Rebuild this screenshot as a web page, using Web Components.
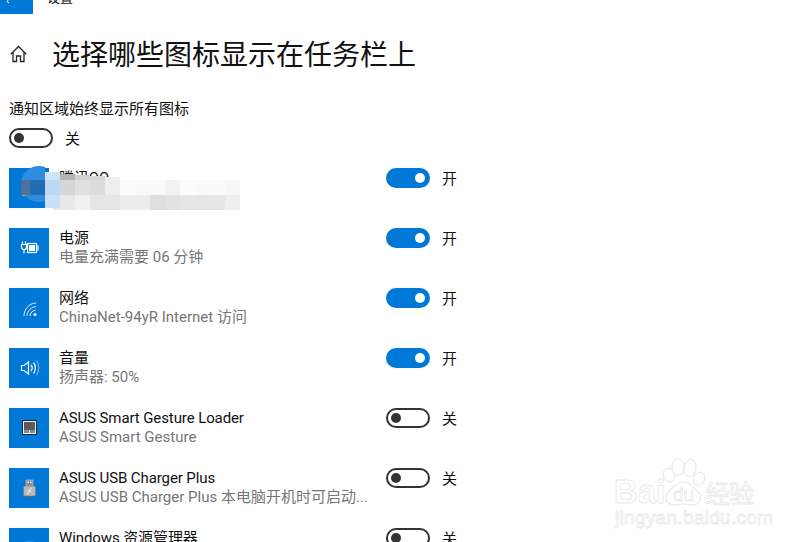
<!DOCTYPE html>
<html lang="zh">
<head>
<meta charset="utf-8">
<title>设置</title>
<style>
    html, body { margin: 0; height: 100%; background: #fff; overflow: hidden; }
    body {
        position: relative;
        color: #000;
        font-family: Roboto, "Noto Sans CJK SC", sans-serif;
        font-size: 15px;
    }
</style>
</head>
<body>
<settings-bar>设置</settings-bar>
<page-title>选择哪些图标显示在任务栏上</page-title>
<master-switch label="通知区域始终显示所有图标"></master-switch>

<tray-row name="腾讯QQ" sub="" on>
    <svg slot="icon" viewBox="0 0 40 40" width="40" height="40">
        <path d="M13 23h2l1 2h-3z" fill="#111"/><rect x="13" y="27" width="4" height="1" fill="#f0a020"/>
    </svg>
</tray-row>
<tray-row name="电源" sub="电量充满需要 06 分钟" on>
    <svg slot="icon" viewBox="0 0 40 40" width="40" height="40" fill="none" stroke="#fff" stroke-width="1.2">
        <path d="M13.5 13.5v3M16.5 13.5v3M12.5 16.5h5v2.5a2.5 2.5 0 0 1-5 0zM15 21.500v4"/>
        <rect x="18.500" y="15.500" width="9" height="9"/>
        <rect x="20" y="17" width="6" height="6" fill="#fff" stroke="none"/>
        <path d="M27.500 18h1.500v4h-1.500"/>
    </svg>
</tray-row>
<tray-row name="网络" sub="ChinaNet-94yR Internet 访问" on>
    <svg slot="icon" viewBox="0 0 40 40" width="40" height="40" fill="none" stroke="#fff" stroke-width="1">
        <path d="M15 28c0-7 5-12.500 12-13" opacity=".85"/>
        <path d="M18 28c0-5 4-9 9-9.500" opacity=".85"/>
        <path d="M21 28c0-3 2.500-5.500 5.500-6"/>
        <circle cx="26" cy="26.500" r="1.600" fill="#fff" stroke="none"/>
    </svg>
</tray-row>
<tray-row name="音量" sub="扬声器: 50%" on>
    <svg slot="icon" viewBox="0 0 40 40" width="40" height="40" fill="none" stroke="#fff" stroke-width="1.200">
        <path d="M12.500 17.500h2.500l4.500-3.500v12l-4.500-3.500h-2.500z"/>
        <path d="M22 17c1.500 1.800 1.500 4.200 0 6"/>
        <path d="M24.500 14.500c2.500 3 2.500 8 0 11"/>
        <path d="M27.500 12.500c3 4 3 11 0 15" opacity=".45"/>
    </svg>
</tray-row>
<tray-row name="ASUS Smart Gesture Loader" sub="ASUS Smart Gesture">
    <svg slot="icon" viewBox="0 0 40 40" width="40" height="40">
        <rect x="13.500" y="12.500" width="14" height="14" fill="#5a5a5a" stroke="#1d2530" stroke-width="1"/>
        <rect x="14.500" y="13.500" width="12" height="12" fill="none" stroke="#eef" stroke-width="1"/>
        <rect x="15" y="22" width="11" height="3" fill="#8a8a8a"/>
        <rect x="20" y="22" width="1" height="3" fill="#ddd"/>
    </svg>
</tray-row>
<tray-row name="ASUS USB Charger Plus" sub="ASUS USB Charger Plus 本电脑开机时可启动...">
    <svg slot="icon" viewBox="0 0 40 40" width="40" height="40">
        <rect x="17" y="12" width="7" height="6" fill="#8b8b8b" stroke="#ccc" stroke-width=".6"/>
        <rect x="18.500" y="13.500" width="1.500" height="1.500" fill="#eee"/>
        <rect x="21" y="13.500" width="1.500" height="1.500" fill="#eee"/>
        <rect x="14.500" y="18" width="12" height="10" rx="1.500" fill="#b9b9b9" stroke="#777" stroke-width=".6"/>
        <path d="M23 20l-4 3h3l-4 3" fill="none" stroke="#eee" stroke-width="1"/>
        <rect x="18.500" y="28" width="4" height="1.500" fill="#666"/>
    </svg>
</tray-row>
<tray-row name="Windows 资源管理器" sub="">
    <svg slot="icon" viewBox="0 0 40 40" width="40" height="40">
        <ellipse cx="20" cy="16" rx="7" ry="3.500" fill="#1a8ae6"/>
    </svg>
</tray-row>

<mosaic-patch></mosaic-patch>
<baidu-mark></baidu-mark>

<script>
// barra superior, recortada por el scroll de la captura
class SettingsBar extends HTMLElement {
    constructor() {
        super();
        this.attachShadow({ mode: 'open' });
        this.shadowRoot.innerHTML = `
        <style>
            :host { display: flex; height: 14px; gap: 14px; overflow: hidden; }
            .back { width: 33px; height: 14px; background: #0078d7; flex: none; }
            .back svg { display: block; }
            .txt { font-size: 13px; line-height: 16px; margin-top: -10px; color: #111; }
        </style>
        <div class="back">
            <svg width="33" height="14" viewBox="0 0 33 14" fill="none" stroke="#fff" stroke-width="1">
                <path d="M9 -1 L7 1.500 L9 3"/>
            </svg>
        </div>
        <div class="txt"><slot></slot></div>
        `;
    }
}

class PageTitle extends HTMLElement {
    constructor() {
        super();
        this.attachShadow({ mode: 'open' });
        this.shadowRoot.innerHTML = `
        <style>
            :host {
                display: flex;
                align-items: center;
                height: 40px;
                margin-top: 20px;
                padding-left: 10px;
                gap: 25px;
            }
            svg { flex: none; }
            h1 { margin: 4px 0 0; font-size: 28px; font-weight: 400; line-height: 40px; white-space: nowrap; color: #111; }
        </style>
        <svg width="17" height="18" viewBox="0 0 17 18" fill="none" stroke="#222" stroke-width="1.300">
            <path d="M.8 9.200 8.500 1.500l7.700 7.700M3 7.500v9h3.500v-5.500h4v5.500h3.500v-9"/>
        </svg>
        <h1><slot></slot></h1>
        `;
    }
}

// interruptor: atributo "on" = encendido
class ToggleSwitch extends HTMLElement {
    static get observedAttributes() {
        return ['on'];
    }

    constructor() {
        super();
        this.attachShadow({ mode: 'open' });
    }

    connectedCallback() {
        this.render();
    }

    attributeChangedCallback() {
        this.render();
    }

    render() {
        const on = this.hasAttribute('on');
        this.shadowRoot.innerHTML = `
        <style>
            :host { display: flex; align-items: flex-start; height: 20px; gap: 12px; flex: none; }
            .track {
                box-sizing: border-box;
                width: 44px;
                height: 20px;
                border-radius: 10px;
                border: 2px solid ${on ? '#0078d7' : '#333'};
                background: ${on ? '#0078d7' : '#fff'};
                display: flex;
                align-items: center;
                justify-content: ${on ? 'flex-end' : 'flex-start'};
                padding: 0 3px;
            }
            .knob { width: 10px; height: 10px; border-radius: 50%; background: ${on ? '#fff' : '#333'}; }
            .label { font-size: 15px; line-height: 20px; margin-top: 1px; color: #111; }
        </style>
        <div class="track"><div class="knob"></div></div>
        <div class="label">${on ? '开' : '关'}</div>
        `;
    }
}

class MasterSwitch extends HTMLElement {
    constructor() {
        super();
        this.attachShadow({ mode: 'open' });
        this.shadowRoot.innerHTML = `
        <style>
            :host { display: block; margin-top: 24px; margin-bottom: 20px; padding-left: 9px; }
            .cap { font-size: 15px; line-height: 20px; padding-top: 1px; margin-bottom: 9px; color: #111; }
        </style>
        <div class="cap">${this.getAttribute('label')}</div>
        <toggle-switch></toggle-switch>
        `;
    }
}

class TrayRow extends HTMLElement {
    constructor() {
        super();
        this.attachShadow({ mode: 'open' });
        const name = this.getAttribute('name');
        const sub = this.getAttribute('sub');
        const on = this.hasAttribute('on');
        this.shadowRoot.innerHTML = `
        <style>
            :host {
                display: flex;
                height: 40px;
                margin-bottom: 20px;
                padding-left: 9px;
                align-items: flex-start;
            }
            .tile { width: 40px; height: 40px; background: #0078d7; flex: none; margin-right: 10px; }
            .tile ::slotted(svg) { display: block; }
            .text { width: 327px; flex: none; margin-top: 1px; }
            .name { font-size: 15px; line-height: 19px; letter-spacing: -.1px; color: #111; white-space: nowrap; }
            .sub { font-size: 15px; line-height: 19px; color: #767676; white-space: nowrap; }
        </style>
        <div class="tile"><slot name="icon"></slot></div>
        <div class="text">
            <div class="name">${name}</div>
            <div class="sub">${sub}</div>
        </div>
        <toggle-switch ${on ? 'on' : ''}></toggle-switch>
        `;
    }
}

// mosaico que tapa el texto de la primera fila
class MosaicPatch extends HTMLElement {
    constructor() {
        super();
        this.attachShadow({ mode: 'open' });
        const rowA = ['d6d6d6', 'e0e0e0', 'dcdcdc', 'eeeeee', 'fbfbfb', 'fafafa', 'fafafa', 'f2f2f2', 'fbfbfb', 'f9f9f9', 'fafafa', 'f6f6f6'];
        const rowB = ['e8e8e8', 'f0f0f0', 'e4e4e4', 'e6e6e6', 'ececec', 'ececec', 'dfdfdf', 'e2e2e2', 'e6e6e6', 'e5e5e5', 'e6e6e6', 'eeeeee'];
        const cell = (x, y, w, h, c) =>
            `<i style="left:${x}px;top:${y}px;width:${w}px;height:${h}px;background:${c}"></i>`;
        let cells = '';
        rowA.forEach((c, i) => { cells += cell(60 + i * 15, 180, 15, 15, '#' + c); });
        rowB.forEach((c, i) => { cells += cell(60 + i * 15, 195, 15, 15, '#' + c); });
        this.shadowRoot.innerHTML = `
        <style>
            :host { position: absolute; left: 0; top: 0; width: 0; height: 0; }
            i { position: absolute; display: block; }
            .dot {
                position: absolute; left: 21px; top: 166px; width: 36px; height: 36px;
                border-radius: 50%; background: #2f8de0;
                clip-path: inset(0 12px 0 0);
            }
        </style>
        <div class="dot"></div>
        ${cell(21, 180, 9, 15, '#4f7099')}
        ${cell(30, 180, 15, 15, '#206cb6')}
        ${cell(45, 172, 15, 8, '#cfe4f7')}
        ${cell(45, 180, 15, 15, '#b9d8f3')}
        ${cell(45, 195, 15, 13, '#c8e1f7')}
        ${cell(53, 208, 7, 2, '#d8e9f8')}
        ${cell(60, 174, 15, 6, '#b4b4b4')}
        ${cell(75, 175, 15, 5, '#d2d2d2')}
        ${cell(90, 176, 15, 4, '#d8d8d8')}
        ${cell(105, 177, 15, 3, '#eeeeee')}
        ${cells}
        `;
    }
}

// marca de agua de la esquina
class BaiduMark extends HTMLElement {
    constructor() {
        super();
        this.attachShadow({ mode: 'open' });
        this.shadowRoot.innerHTML = `
        <style>
            :host {
                position: absolute;
                left: 614px;
                top: 454px;
                width: 150px;
                height: 76px;
                color: #fff;
                -webkit-text-stroke: .8px #e9e9e9;
                font-family: "Liberation Sans", sans-serif;
            }
            svg { position: absolute; left: 40px; top: 0; }
            span { position: absolute; white-space: nowrap; }
            .bai { left: 0; top: 20px; font-size: 33px; line-height: 36px; font-weight: 700; }
            .du { left: 59px; top: 31px; font-size: 19px; line-height: 20px; }
            .jy { left: 91px; top: 24px; font-size: 25px; line-height: 28px; font-family: "Noto Sans CJK SC", sans-serif; letter-spacing: -1px; }
            .url { left: 1px; top: 53px; font-size: 19px; line-height: 22px; letter-spacing: .3px; }
        </style>
        <svg width="60" height="54" viewBox="0 0 60 54" fill="#fff" stroke="#e9e9e9" stroke-width="1.100">
            <ellipse cx="15" cy="21" rx="5.500" ry="7" transform="rotate(-20 15 21)"/>
            <ellipse cx="24" cy="13" rx="6" ry="8.500"/>
            <ellipse cx="36" cy="14" rx="6" ry="8.500" transform="rotate(10 36 14)"/>
            <ellipse cx="45" cy="25" rx="5.500" ry="7" transform="rotate(25 45 25)"/>
            <path d="M30 28c6 0 8 4 12 8 7 5 6 15-4 15-3 0-5-1-8-1s-6 1-9 1c-10 0-12-9-5-15 4-3 7-8 14-8z"/>
        </svg>
        <span class="bai">Bai</span>
        <span class="du">du</span>
        <span class="jy">经验</span>
        <span class="url">jingyan.baidu.com</span>
        `;
    }
}

customElements.define('settings-bar', SettingsBar);
customElements.define('page-title', PageTitle);
customElements.define('toggle-switch', ToggleSwitch);
customElements.define('master-switch', MasterSwitch);
customElements.define('tray-row', TrayRow);
customElements.define('mosaic-patch', MosaicPatch);
customElements.define('baidu-mark', BaiduMark);
</script>
</body>
</html>
